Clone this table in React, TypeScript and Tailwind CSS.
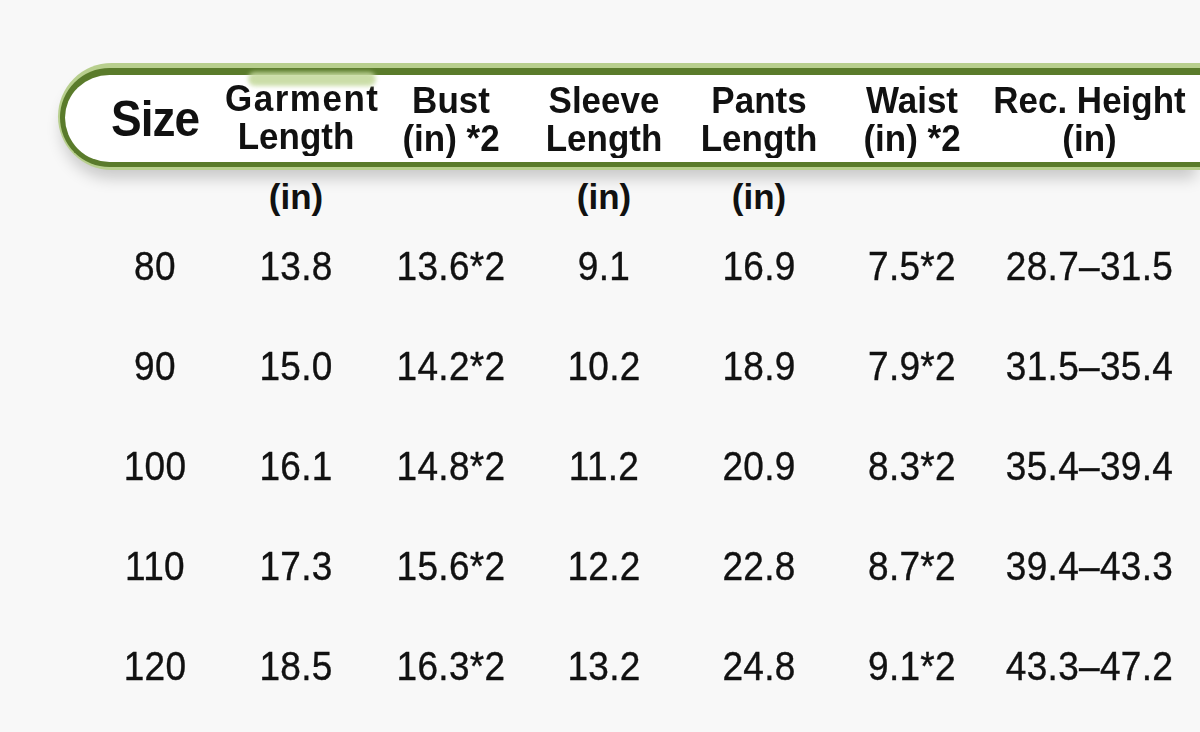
const cols = ["w-[140px]", "w-[142px]", "w-[168px]", "w-[138px]", "w-[172px]", "w-[134px]", "w-[221px]"];

const headers: string[][] = [
  ["Size"],
  ["Garment", "Length"],
  ["Bust", "(in) *2"],
  ["Sleeve", "Length"],
  ["Pants", "Length"],
  ["Waist", "(in) *2"],
  ["Rec. Height", "(in)"],
];

const units = ["", "(in)", "", "(in)", "(in)", "", ""];

const rows: string[][] = [
  ["80", "13.8", "13.6*2", "9.1", "16.9", "7.5*2", "28.7–31.5"],
  ["90", "15.0", "14.2*2", "10.2", "18.9", "7.9*2", "31.5–35.4"],
  ["100", "16.1", "14.8*2", "11.2", "20.9", "8.3*2", "35.4–39.4"],
  ["110", "17.3", "15.6*2", "12.2", "22.8", "8.7*2", "39.4–43.3"],
  ["120", "18.5", "16.3*2", "13.2", "24.8", "9.1*2", "43.3–47.2"],
];

export default function App() {
  return (
    <div className="relative h-[732px] w-[1200px] overflow-hidden bg-[#f8f8f8] font-['Liberation_Sans',Arial,sans-serif] text-[#111]">
      {/* header pill */}
      <div className="pl-[58px] pt-[63px]">
        <div className="relative rounded-l-[54px] bg-[#b8cf8e] pb-[3px] pl-[2px] pt-[5px] shadow-[0_12px_16px_-4px_rgba(0,0,0,0.2)]">
          <div className="flex h-[99px] items-center rounded-l-[50px] border-b-[5px] border-l-[5px] border-t-[7px] border-[#5a7b2b] bg-white pl-[20px]">
            {headers.map((h, i) => (
              <div key={i} className={`${cols[i]} shrink-0 text-center font-bold`}>
                {h.length === 1 ? (
                  <div className="scale-y-[1.08] text-[46px] leading-[50px] tracking-[-1px]">{h[0]}</div>
                ) : (
                  h.map((line, j) => (
                    <div key={j} className={`scale-y-[1.05] text-[35px] leading-[38px] whitespace-nowrap ${i === 1 && j === 0 ? "-mt-[4px] tracking-[1.5px]" : ""}`}>
                      {line}
                    </div>
                  ))
                )}
              </div>
            ))}
          </div>
          <span className="absolute left-[190px] top-[9px] h-[14px] w-[128px] rounded-full bg-[#c6da9f] opacity-90 blur-[2px]" />
        </div>
      </div>

      {/* unit row */}
      <div className="mt-[6px] flex h-[41px] items-center pl-[85px]">
        {units.map((u, i) => (
          <div key={i} className={`${cols[i]} shrink-0 text-center text-[35px] font-bold leading-[41px]`}>
            {u}
          </div>
        ))}
      </div>

      {/* data rows */}
      {rows.map((r, ri) => (
        <div key={ri} className="flex h-[100px] items-center pl-[85px]">
          {r.map((v, ci) => (
            <div key={ci} className={`${cols[ci]} shrink-0 text-center`}>
              <span className="inline-block scale-y-[1.12] whitespace-nowrap text-[37px] leading-[44px] tracking-[0.3px] [-webkit-text-stroke:0.35px_#111]">{v}</span>
            </div>
          ))}
        </div>
      ))}
    </div>
  );
}
